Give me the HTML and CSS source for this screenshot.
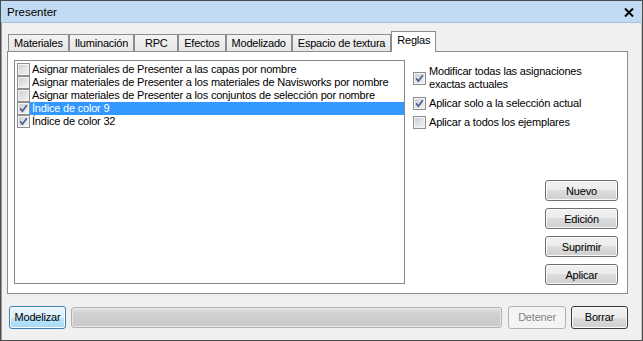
FILE: index.html
```html
<!DOCTYPE html>
<html lang="es">
<head>
    <meta charset="UTF-8">
    <title>Presenter</title>
    <link rel="stylesheet" href="styles.css">
</head>
<body>
    <div class="window">
        <div class="titlebar">
            <span class="title">Presenter</span>
            <svg class="close" width="10" height="9" viewBox="0 0 10 9">
                <path d="M1 0.5 L9 8.5 M9 0.5 L1 8.5" stroke="#000" stroke-width="2" fill="none"/>
            </svg>
        </div>
        <div class="main">
            <div class="tabs">
                <div class="tab">Materiales</div>
                <div class="tab">Iluminación</div>
                <div class="tab">RPC</div>
                <div class="tab">Efectos</div>
                <div class="tab">Modelizado</div>
                <div class="tab">Espacio de textura</div>
                <div class="tab active">Reglas</div>
            </div>
            <div class="panel">
                <div class="list">
                    <div class="row">
                        <span class="check"></span>
                        <span class="label">Asignar materiales de Presenter a las capas por nombre</span>
                    </div>
                    <div class="row">
                        <span class="check"></span>
                        <span class="label">Asignar materiales de Presenter a los materiales de Navisworks por nombre</span>
                    </div>
                    <div class="row">
                        <span class="check"></span>
                        <span class="label">Asignar materiales de Presenter a los conjuntos de selección por nombre</span>
                    </div>
                    <div class="row selected">
                        <span class="check"><svg viewBox="0 0 13 13"><path d="M3.2 6.4 L5.4 9.2 L9.8 3.2" /></svg></span>
                        <span class="label">Índice de color 9</span>
                    </div>
                    <div class="row">
                        <span class="check"><svg viewBox="0 0 13 13"><path d="M3.2 6.4 L5.4 9.2 L9.8 3.2" /></svg></span>
                        <span class="label">Índice de color 32</span>
                    </div>
                </div>
                <div class="side">
                    <div class="options">
                        <div class="option">
                            <span class="check"><svg viewBox="0 0 13 13"><path d="M3.2 6.4 L5.4 9.2 L9.8 3.2" /></svg></span>
                            <span>Modificar todas las asignaciones<br>exactas actuales</span>
                        </div>
                        <div class="option">
                            <span class="check"><svg viewBox="0 0 13 13"><path d="M3.2 6.4 L5.4 9.2 L9.8 3.2" /></svg></span>
                            <span>Aplicar solo a la selección actual</span>
                        </div>
                        <div class="option">
                            <span class="check"></span>
                            <span>Aplicar a todos los ejemplares</span>
                        </div>
                    </div>
                    <div class="actions">
                        <button class="btn">Nuevo</button>
                        <button class="btn">Edición</button>
                        <button class="btn">Suprimir</button>
                        <button class="btn">Aplicar</button>
                    </div>
                </div>
            </div>
            <div class="footer">
                <button class="btn focused">Modelizar</button>
                <div class="progress"></div>
                <button class="btn disabled">Detener</button>
                <button class="btn default">Borrar</button>
            </div>
        </div>
    </div>
</body>
</html>
```

FILE: styles.css
```css
body {
    margin: 0;
    padding: 0;
    background: #f0f0f0;
    font-family: "Liberation Sans", Arial, sans-serif;
    font-size: 11px;
    letter-spacing: -0.2px;
    color: #000;
}
.window {
    width: 643px;
    height: 341px;
    box-sizing: border-box;
    border: 1px solid #4d4d4d;
    box-shadow: inset 1px 0 #9a9a9a, inset -1px 0 #c8c8c8;
    background: #f0f0f0;
    display: flex;
    flex-direction: column;
}
.titlebar {
    height: 21px;
    background: #c0dbf3;
    border-bottom: 1px solid #a9c1d8;
    display: flex;
    align-items: center;
    justify-content: space-between;
    padding: 0 8px 0 6px;
}
.title {
    font-size: 11.5px;
    letter-spacing: 0;
}
.close {
    display: block;
    margin-top: 1px;
}
.main {
    flex: 1;
    display: flex;
    flex-direction: column;
    padding: 0 14px 0 6px;
}
.tabs {
    display: flex;
    align-items: flex-end;
    height: 20px;
    margin-top: 8px;
    padding-left: 1px;
}
.tab {
    height: 17px;
    min-width: 44px;
    box-sizing: border-box;
    padding: 0 5px;
    border: 1px solid #898c95;
    border-bottom: none;
    background: linear-gradient(#f3f3f3, #e6e6e6);
    line-height: 16px;
    text-align: center;
    white-space: nowrap;
}
.tab.active {
    height: 21px;
    margin-bottom: -1px;
    background: #fff;
    position: relative;
    z-index: 1;
    line-height: 17px;
}
.panel {
    height: 243px;
    box-sizing: border-box;
    border: 1px solid #898c95;
    background: #fff;
    display: flex;
    padding: 8px 9px 9px 6px;
}
.list {
    width: 391px;
    box-sizing: border-box;
    border: 1px solid #828790;
    padding: 2px 0 0 2px;
}
.row {
    display: flex;
    height: 13px;
    line-height: 13px;
}
.row .label {
    flex: 1;
    padding-left: 2px;
    white-space: nowrap;
}
.row.selected .label {
    background: #3399ff;
    color: #fff;
}
.check {
    width: 13px;
    height: 13px;
    flex: none;
    box-sizing: border-box;
    border: 1px solid #8e8f8f;
    background: #f4f4f4;
    position: relative;
}
.check::before {
    content: "";
    position: absolute;
    left: 1px;
    top: 1px;
    width: 9px;
    height: 9px;
    background: linear-gradient(135deg, #cdd0d4, #f3f3f3);
}
.check svg {
    position: absolute;
    left: -1px;
    top: -1px;
    width: 13px;
    height: 13px;
}
.check path {
    fill: none;
    stroke: #4a5d93;
    stroke-width: 1.7;
}
.side {
    flex: 1;
    display: flex;
    flex-direction: column;
    justify-content: space-between;
    margin-left: 8px;
    padding-top: 5px;
}
.options {
    display: flex;
    flex-direction: column;
    gap: 6px;
}
.option {
    display: flex;
    align-items: center;
    gap: 3px;
    line-height: 13px;
}
.actions {
    align-self: flex-end;
    display: flex;
    flex-direction: column;
    gap: 7px;
    margin-bottom: -1px;
}
.btn {
    width: 73px;
    height: 21px;
    padding: 0;
    font-family: inherit;
    font-size: 11px;
    letter-spacing: -0.2px;
    color: #000;
    border: 1px solid #707070;
    border-radius: 3px;
    background: linear-gradient(#f2f2f2 0%, #ebebeb 50%, #dddddd 50%, #cfcfcf 100%);
    box-shadow: inset 0 0 0 1px #fbfbfb;
}
.footer {
    flex: 1;
    display: flex;
    align-items: center;
    padding-left: 2px;
}
.footer .btn {
    width: 57px;
    height: 23px;
}
.btn.focused {
    border-color: #3c7fb1;
    background: linear-gradient(#eaf6fd 0%, #d9f0fc 50%, #bee6fd 50%, #a7d9f5 100%);
}
.btn.disabled {
    width: 58px;
    margin-left: 6px;
    border-color: #adb2b5;
    background: #f4f4f4;
    box-shadow: none;
    color: #838383;
}
.btn.default {
    margin-left: 5px;
    border-color: #3a3a3a;
}
.progress {
    flex: 1;
    height: 21px;
    margin-left: 5px;
    box-sizing: border-box;
    border: 1px solid #b2b2b2;
    border-radius: 3px;
    background: linear-gradient(#e2e2e2 0%, #d0d0d0 30%, #c9c9c9 100%);
    box-shadow: inset 0 0 0 1px #e8e8e8;
}
```
